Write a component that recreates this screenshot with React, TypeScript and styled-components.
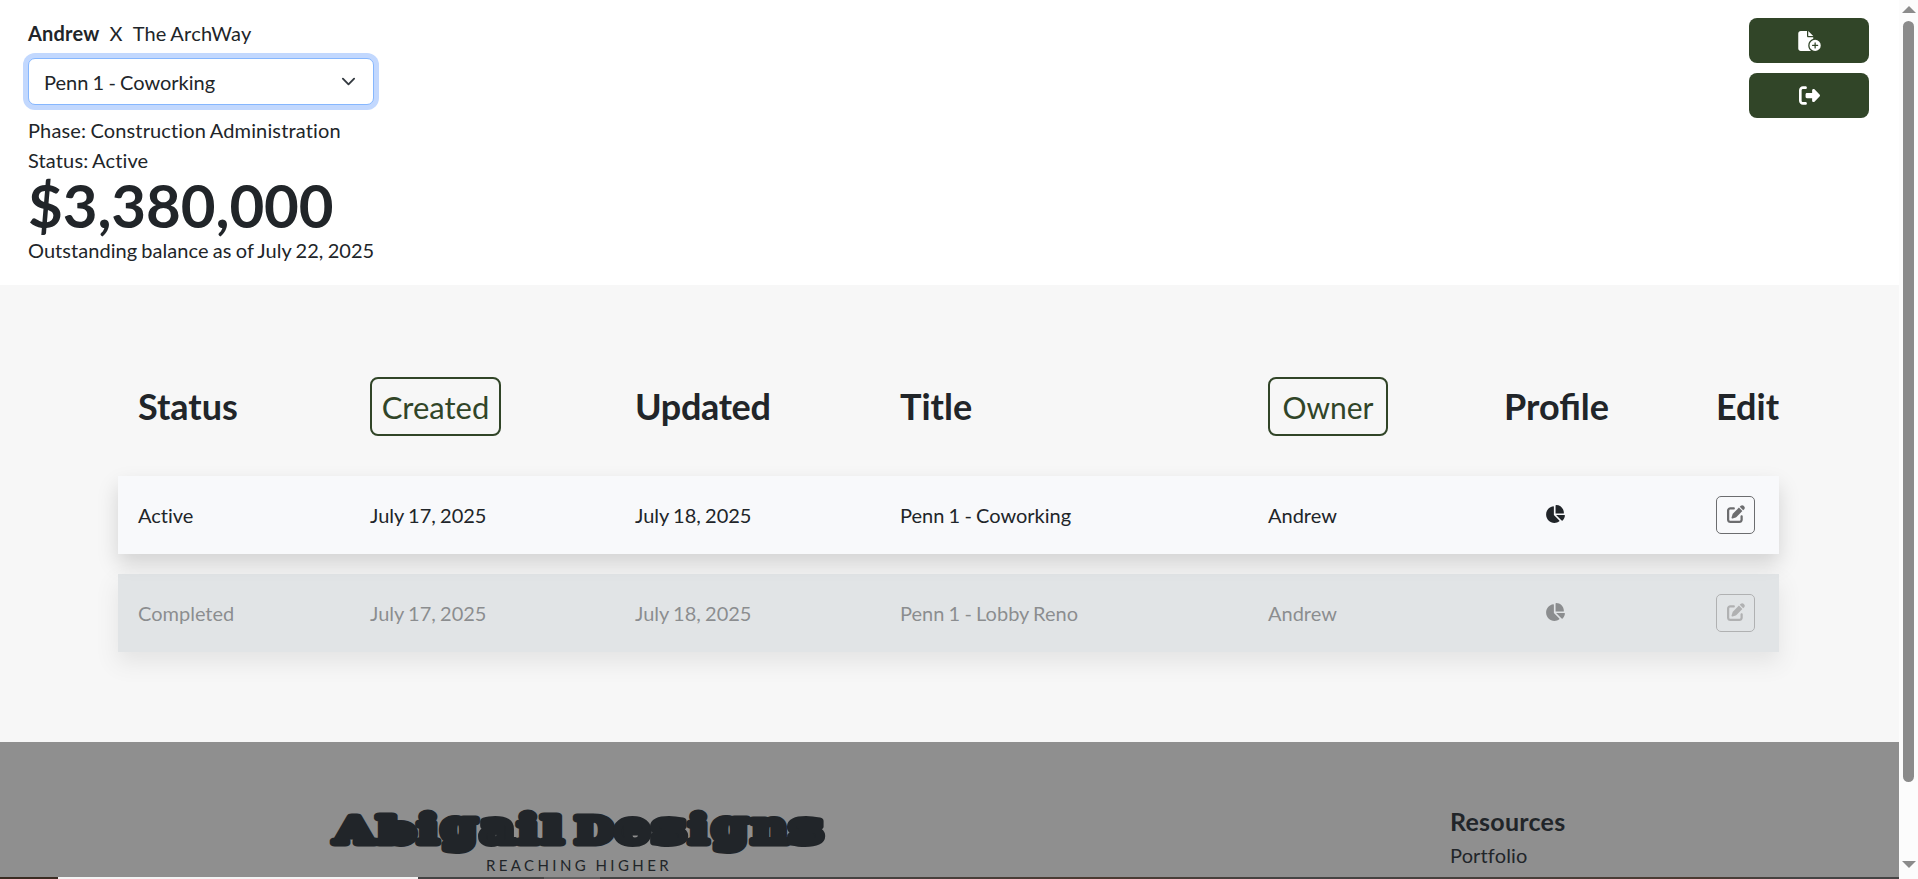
import React from 'react';
import styled, { createGlobalStyle } from 'styled-components';
import { FaFileCirclePlus, FaRightFromBracket, FaChartPie, FaPenToSquare } from 'react-icons/fa6';

const Global = createGlobalStyle`
  *, *::before, *::after { box-sizing: border-box; }
  html, body { margin: 0; height: 100%; overflow: hidden; }
  body {
    font-family: Lato, "Liberation Sans", sans-serif;
    font-size: 20px;
    line-height: 30px;
    font-variant-ligatures: none;
    word-spacing: -0.9px;
    color: #212529;
    background: #fff;
  }
  button { font-family: inherit; cursor: pointer; }
`;

const Screen = styled.div`
  display: flex;
  height: 879px;
  overflow: hidden;
`;

const Page = styled.div`
  flex: 1;
  min-width: 0;
  display: flex;
  flex-direction: column;
`;

const Header = styled.header`
  display: flex;
  justify-content: space-between;
  align-items: flex-start;
  height: 285px;
  padding: 18px 30px 0 28px;
`;

const Summary = styled.div`
  display: flex;
  flex-direction: column;
`;

const Identity = styled.div`
  display: flex;
  gap: 10px;
  letter-spacing: 0.2px;
`;

const Detail = styled.div<{ $spacing: number }>`
  letter-spacing: ${(p) => p.$spacing}px;
`;

const ProjectSelect = styled.button`
  display: flex;
  align-items: center;
  justify-content: space-between;
  width: 346px;
  height: 47px;
  margin: 10px 0;
  padding: 0 17px 0 15px;
  font-size: 20px;
  word-spacing: -0.9px;
  color: #212529;
  background: #fff;
  border: 1px solid #86b7fe;
  border-radius: 7px;
  box-shadow: 0 0 0 5px #c2d8fe;
`;

const Balance = styled.div`
  font-size: 60px;
  font-weight: 700;
  line-height: 60px;
  letter-spacing: -0.1px;
`;

const Actions = styled.div`
  display: flex;
  flex-direction: column;
  gap: 10px;
`;

const ActionButton = styled.button`
  display: flex;
  align-items: center;
  justify-content: center;
  width: 120px;
  height: 45px;
  color: #fff;
  font-size: 20px;
  background: #314528;
  border: 0;
  border-radius: 8px;
`;

const NewIcon = styled(FaFileCirclePlus)`
  width: 23px;
  height: 20px;
`;

const Projects = styled.main`
  height: 457px;
  padding: 72px 120px 0 118px;
  background: #f7f7f7;
`;

const Row = styled.div`
  display: grid;
  grid-template-columns: 232px 265px 265px 368px 236px 212px 1fr;
  align-items: center;
  padding-left: 20px;
`;

const HeadRow = styled(Row)`
  height: 99px;
  margin-bottom: 20px;
`;

const Heading = styled.div<{ $tight?: boolean }>`
  font-size: 36px;
  font-weight: 700;
  line-height: 52px;
  padding-bottom: 2px;
  white-space: nowrap;
  font-variant-ligatures: normal;
  letter-spacing: ${(p) => (p.$tight ? '-0.35px' : 'normal')};
`;

const SortButton = styled.button<{ $width: number; $size: number }>`
  width: ${(p) => p.$width}px;
  height: 59px;
  padding: 0;
  font-size: ${(p) => p.$size}px;
  line-height: 48px;
  color: #314528;
  background: transparent;
  border: 2px solid #314528;
  border-radius: 8px;
`;

const ProjectRow = styled(Row)<{ $done?: boolean }>`
  height: 78px;
  margin-bottom: 20px;
  background: ${(p) => (p.$done ? '#cdd3d7' : '#f8f9fb')};
  opacity: ${(p) => (p.$done ? 0.5 : 1)};
  box-shadow: 0 10px 20px rgba(0, 0, 0, 0.15);
`;

const ProfileCell = styled.div`
  display: flex;
  justify-content: center;
  width: 102px;
  padding-bottom: 2px;
`;

const EditButton = styled.button`
  display: flex;
  align-items: center;
  justify-content: center;
  width: 39px;
  height: 38px;
  padding: 0 0 2px;
  font-size: 18px;
  color: #6c6d6f;
  background: transparent;
  border: 1px solid #6c6d6f;
  border-radius: 5px;
`;

const Footer = styled.footer`
  flex: 1;
  display: flex;
  justify-content: space-between;
  padding: 62px 331px 0 332px;
  background: #8f8f8f;
`;

const Brand = styled.div`
  display: flex;
  flex-direction: column;
  align-items: center;
  width: 494px;
`;

const Wordmark = styled.svg`
  display: block;
  width: 494px;
  height: 52px;
  overflow: visible;
  font-family: "DejaVu Serif", serif;
  font-weight: 700;
  word-spacing: 0;
`;

const Tagline = styled.div`
  font-size: 15px;
  line-height: 19px;
  letter-spacing: 3.4px;
`;

const Resources = styled.nav`
  width: 118px;
`;

const ResourcesTitle = styled.div`
  font-size: 25px;
  font-weight: 700;
  line-height: 35px;
  letter-spacing: 0.25px;
`;

const ResourceLink = styled.div`
  padding-top: 1px;
  letter-spacing: 0.15px;
`;

const Taskbar = styled.div`
  height: 2px;
  background: linear-gradient(90deg, #3a2c22 58px, #f4f4f4 58px 418px, #444 418px 544px, #626262 544px 600px, #444 600px 800px, #4a3a31 1100px, #444 1300px, #4a3a31 1700px, #444 1800px);
`;

const Scrollbar = styled.div`
  display: flex;
  flex-direction: column;
  align-items: center;
  width: 19px;
  padding: 6px 0 10px;
  background: #fcfcfc;
`;

const Arrow = styled.svg`
  display: block;
  width: 14px;
  height: 8px;
  fill: #8b8b8b;
`;

const Thumb = styled.div`
  width: 11px;
  height: 761px;
  margin: 7px 0 auto;
  background: #8b8b8b;
  border-radius: 6px;
`;

const rows = [
  { status: 'Active', title: 'Penn 1 - Coworking', done: false },
  { status: 'Completed', title: 'Penn 1 - Lobby Reno', done: true },
];

// Letter, left edge, width, font size and baseline of the wordmark.
const letters: [string, number, number, number, number][] = [
  ['A', 3, 39, 36, 39],
  ['b', 46, 37, 35, 39],
  ['i', 86, 20, 39, 39],
  ['g', 109, 36, 42, 37],
  ['a', 148, 35, 45, 39],
  ['i', 186, 20, 39, 39],
  ['l', 210, 20, 35, 39],
  ['D', 243, 38, 36, 39],
  ['e', 283, 35, 45, 39],
  ['s', 320, 34, 45, 39],
  ['i', 357, 19, 39, 39],
  ['g', 380, 36, 42, 37],
  ['n', 419, 37, 45, 39],
  ['s', 457, 34, 45, 39],
];

export default function App() {
  return (
    <Screen>
      <Global />
      <Page>
        <Header>
          <Summary>
            <Identity><b>Andrew</b><span>X</span><span>The ArchWay</span></Identity>
            <ProjectSelect>
              Penn 1 - Coworking
              <svg width="15" height="15" viewBox="0 0 16 16" fill="none" stroke="#343a40" strokeWidth="2" strokeLinecap="round" strokeLinejoin="round"><path d="m2 5 6 6 6-6" /></svg>
            </ProjectSelect>
            <Detail $spacing={0.14}>Phase: Construction Administration</Detail>
            <Detail $spacing={0.14}>Status: Active</Detail>
            <Balance>$3,380,000</Balance>
            <Detail $spacing={0.04}>Outstanding balance as of July 22, 2025</Detail>
          </Summary>
          <Actions>
            <ActionButton aria-label="New project"><NewIcon /></ActionButton>
            <ActionButton aria-label="Sign out"><FaRightFromBracket size={21} /></ActionButton>
          </Actions>
        </Header>
        <Projects>
          <HeadRow>
            <Heading>Status</Heading>
            <SortButton $width={131} $size={31}>Created</SortButton>
            <Heading $tight>Updated</Heading>
            <Heading>Title</Heading>
            <SortButton $width={120} $size={30}>Owner</SortButton>
            <Heading>Profile</Heading>
            <Heading>Edit</Heading>
          </HeadRow>
          {rows.map((r) => (
            <ProjectRow key={r.title} $done={r.done}>
              <span>{r.status}</span>
              <span>July 17, 2025</span>
              <span>July 18, 2025</span>
              <span>{r.title}</span>
              <span>Andrew</span>
              <ProfileCell><FaChartPie size={20} /></ProfileCell>
              <EditButton aria-label="Edit"><FaPenToSquare /></EditButton>
            </ProjectRow>
          ))}
        </Projects>
        <Footer>
          <Brand>
            <Wordmark viewBox="0 0 494 52">
              <text fill="#212529" stroke="#212529" strokeWidth="7" strokeLinejoin="round">
                {letters.map(([ch, x, w, size, y], i) => (
                  <React.Fragment key={i}>
                    {ch === 'D' && ' '}
                    <tspan x={x} y={y} fontSize={size} textLength={w} lengthAdjust="spacingAndGlyphs">{ch}</tspan>
                  </React.Fragment>
                ))}
              </text>
            </Wordmark>
            <Tagline>REACHING HIGHER</Tagline>
          </Brand>
          <Resources>
            <ResourcesTitle>Resources</ResourcesTitle>
            <ResourceLink>Portfolio</ResourceLink>
          </Resources>
        </Footer>
        <Taskbar />
      </Page>
      <Scrollbar>
        <Arrow viewBox="0 0 14 8"><path d="M7 0 14 7H0Z" /></Arrow>
        <Thumb />
        <Arrow viewBox="0 0 14 8"><path d="M0 0H14L7 7Z" /></Arrow>
      </Scrollbar>
    </Screen>
  );
}
